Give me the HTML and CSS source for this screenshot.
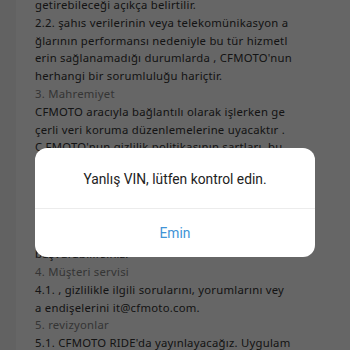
FILE: index.html
```html
<!DOCTYPE html>
<html lang="tr">
<head>
<meta charset="utf-8">
<link rel="stylesheet" href="styles.css">
</head>
<body>
<div class="page">
  <div class="content">
    <p class="txt">getirebileceği açıkça belirtilir.<br>2.2. şahıs verilerinin veya telekomünikasyon a<br>ğlarının performansı nedeniyle bu tür hizmetl<br>erin sağlanamadığı durumlarda , CFMOTO'nun<br>herhangi bir sorumluluğu hariçtir.</p>
    <p class="hd">3. Mahremiyet</p>
    <p class="txt">CFMOTO aracıyla bağlantılı olarak işlerken ge<br>çerli veri koruma düzenlemelerine uyacaktır .<br>Ç FMOTO'nun gizlilik politikasının şartları, bu<br>hizmetin kullanımı sırasında toplanan kişisel v<br>erilerin işlenmesi için de geçerlidir. Gizlilik p<br>olitikası, kişisel verilerin nasıl toplandığını,<br>kullanıldığını ve korunduğunu açıklar. Kullan<br>ıcılar gizlilik politikasını uygulama içinden<br>başvurabilirsiniz.</p>
    <p class="hd">4. Müşteri servisi</p>
    <p class="txt">4.1. , gizlilikle ilgili sorularını, yorumlarını vey<br>a endişelerini it@cfmoto.com.</p>
    <p class="hd">5. revizyonlar</p>
    <p class="txt">5.1. CFMOTO RIDE'da yayınlayacağız. Uygulam<br>a içinde bildirim göndereceğiz.</p>
  </div>
</div>
<div class="overlay">
  <div class="dialog">
    <div class="msg">Yanlış VIN, lütfen kontrol edin.</div>
    <div class="btn">Emin</div>
  </div>
</div>
</body>
</html>
```
FILE: styles.css
```css
html, body {
  margin: 0;
  padding: 0;
  width: 350px;
  height: 350px;
  overflow: hidden;
}
.page {
  background: #f6f6f6;
  height: 350px;
  overflow: hidden;
}
.content {
  background: #ffffff;
  margin-left: 16px;
  padding-left: 19px;
  margin-top: -4px;
  font-family: "Noto Sans", "Open Sans", sans-serif;
  font-size: 11.3px;
  line-height: 17.8px;
  letter-spacing: 0.25px;
  white-space: nowrap;
}
.txt, .hd {
  margin: 0;
}
.txt {
  color: #333333;
}
.hd {
  color: #858585;
}
.overlay {
  position: fixed;
  inset: 0;
  background: rgba(0, 0, 0, 0.6);
  display: flex;
  flex-direction: column;
  align-items: center;
  padding-top: 148px;
}
.dialog {
  width: 280px;
  background: #ffffff;
  border-radius: 12px;
  font-family: Roboto, "Noto Sans", sans-serif;
  font-size: 13.8px;
  text-align: center;
}
.msg {
  height: 60px;
  line-height: 62px;
  color: #222222;
  border-bottom: 1px solid #ececec;
}
.btn {
  height: 48px;
  line-height: 48px;
  color: #4193d6;
}
```
